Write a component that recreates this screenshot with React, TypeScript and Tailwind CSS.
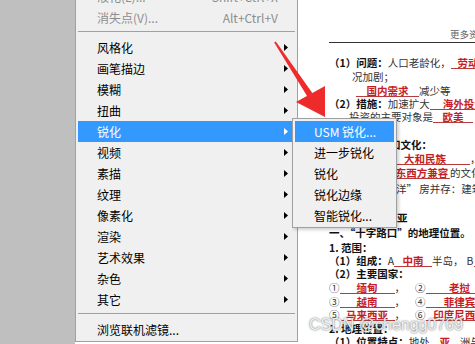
import React from 'react';

type Item =
  | { kind: 'sep' }
  | { kind: 'item'; label: string; shortcut?: string; disabled?: boolean; sub?: boolean; active?: boolean };

const MENU: Item[] = [
  { kind: 'item', label: '液化(L)...', shortcut: 'Shift+Ctrl+X', disabled: true },
  { kind: 'item', label: '消失点(V)...', shortcut: 'Alt+Ctrl+V', disabled: true },
  { kind: 'sep' },
  { kind: 'item', label: '风格化', sub: true },
  { kind: 'item', label: '画笔描边', sub: true },
  { kind: 'item', label: '模糊', sub: true },
  { kind: 'item', label: '扭曲', sub: true },
  { kind: 'item', label: '锐化', sub: true, active: true },
  { kind: 'item', label: '视频', sub: true },
  { kind: 'item', label: '素描', sub: true },
  { kind: 'item', label: '纹理', sub: true },
  { kind: 'item', label: '像素化', sub: true },
  { kind: 'item', label: '渲染', sub: true },
  { kind: 'item', label: '艺术效果', sub: true },
  { kind: 'item', label: '杂色', sub: true },
  { kind: 'item', label: '其它', sub: true },
  { kind: 'sep' },
  { kind: 'item', label: '浏览联机滤镜...' },
];

const SUBMENU = ['USM 锐化...', '进一步锐化', '锐化', '锐化边缘', '智能锐化...'];

const Caret = ({ white }: { white?: boolean }) => (
  <svg width="4" height="7" viewBox="0 0 4 7" className="shrink-0">
    <path d="M0 0L4 3.5L0 7Z" fill={white ? '#ffffff' : '#000000'} />
  </svg>
);

const Blank = ({ w, children }: { w: string; children?: React.ReactNode }) => (
  <span className={`inline-block ${w} border-b border-[#b83a3a] text-center font-bold text-[#c41e24] leading-[11px]`}>
    {children}
  </span>
);

const Line = ({ cls, children }: { cls: string; children?: React.ReactNode }) => (
  <div className={`${cls} whitespace-nowrap text-[#333]`}>{children}</div>
);

export default function App() {
  return (
    <div className="relative flex h-[344px] w-[475px] overflow-hidden bg-white font-['Noto_Sans_CJK_SC',sans-serif]">
      {/* workspace strip */}
      <div className="w-[75px] shrink-0 bg-[#bfbfbf]" />

      {/* filter menu */}
      <div className="w-[223px] shrink-0">
        <div className="-mt-[14px] border-x border-b border-[#a0a0a0] bg-[#f0f0f0] px-[2px] pb-[1px] text-[12px]">
          {MENU.map((it, i) =>
            it.kind === 'sep' ? (
              <div key={i} className="h-[9px] pt-[3px]">
                <div className="h-px bg-[#a0a0a0]" />
              </div>
            ) : (
              <div
                key={i}
                className={`flex h-[21px] items-center pl-[19px] pr-[7px] ${
                  it.active ? 'bg-[#3399ff] text-white' : it.disabled ? 'text-[#8d8d8d]' : 'text-black'
                }`}
              >
                <span className="flex-1">{it.label}</span>
                {it.shortcut && <span className="mr-[10px]">{it.shortcut}</span>}
                {it.sub && <Caret white={it.active} />}
              </div>
            )
          )}
        </div>
      </div>

      {/* document */}
      <div className="flex-1 overflow-hidden bg-white text-[10.5px]">
        <div className="flex h-[42px] items-end pb-[2px] pl-[152px] text-[9.5px] leading-[12px] whitespace-nowrap text-[#666]">
          更多资料下载
        </div>
        <div className="ml-[31px] h-px bg-[#333]" />
        <div className="mt-[12px]">
          <Line cls="h-[15px] leading-[15px] pl-[31px]">
            <b className="text-[#111]">（1）问题：</b>人口老龄化，<Blank w="w-[45px]">劳动力</Blank>短缺
          </Line>
          <Line cls="h-[14px] leading-[14px] pl-[54px]">况加剧；</Line>
          <Line cls="h-[13px] leading-[13px] pl-[58px]">
            <Blank w="w-[63px]">国内需求</Blank>减少等
          </Line>
          <Line cls="h-[13px] leading-[13px] pl-[31px]">
            <b className="text-[#111]">（2）措施：</b>加速扩大<Blank w="w-[68px]">海外投资</Blank>
          </Line>
          <Line cls="h-[14px] leading-[14px] pl-[51px]">
            投资的主要对象是<Blank w="w-[40px]">欧美</Blank>
          </Line>
          <Line cls="h-[14px] leading-[14px]" />
          <Line cls="h-[14px] leading-[14px] pl-[92px]">
            <b className="text-[#111]">和文化：</b>
          </Line>
          <Line cls="h-[13px] leading-[13px] pl-[82px]">
            <Blank w="w-[90px]">大和民族</Blank>，
          </Line>
          <Line cls="h-[16px] leading-[16px] pl-[96px]">
            <Blank w="w-[56px]">东西方兼容</Blank>的文化
          </Line>
          <Line cls="h-[16px] leading-[16px] pl-[98px]">洋” 房并存：建筑、服饰</Line>
          <Line cls="h-[14px] leading-[14px]" />
          <Line cls="h-[14px] leading-[14px] pl-[99px]">
            <b className="text-[#111]">亚</b>
          </Line>
          <Line cls="h-[16px] leading-[16px] pl-[31px]">
            <b className="text-[#111]">一、“十字路口”的地理位置。</b>
          </Line>
          <Line cls="h-[13px] leading-[13px] pl-[31px]">
            <b className="text-[#111]">1. 范围：</b>
          </Line>
          <Line cls="h-[13px] leading-[13px] pl-[31px]">
            <b className="text-[#111]">（1）组成：</b>A<Blank w="w-[38px]">中南</Blank>半岛，
            <span className="ml-[3px]">B</span>
            <Blank w="w-[50px]">马来</Blank>
          </Line>
          <Line cls="h-[14px] leading-[14px] pl-[31px]">
            <b className="text-[#111]">（2）主要国家：</b>
          </Line>
          <Line cls="h-[14px] leading-[14px] pl-[31px]">
            ①<Blank w="w-[55px]">缅甸</Blank>，<span className="ml-[10px]">②</span>
            <Blank w="w-[68px]">老挝</Blank>
          </Line>
          <Line cls="h-[13px] leading-[13px] pl-[31px]">
            ③<Blank w="w-[55px]">越南</Blank>，<span className="ml-[10px]">④</span>
            <Blank w="w-[68px]">菲律宾</Blank>
          </Line>
          <Line cls="h-[14px] leading-[14px] pl-[31px]">
            ⑤<Blank w="w-[55px]">马来西亚</Blank>，<span className="ml-[10px]">⑥</span>
            <Blank w="w-[68px]">印度尼西亚</Blank>
          </Line>
          <Line cls="h-[13px] leading-[13px] pl-[31px]">
            <b className="text-[#111]">2. 地理位置：</b>
          </Line>
          <Line cls="h-[14px] leading-[14px] pl-[31px]">
            <b className="text-[#111]">（1）位置特点：</b>地处<Blank w="w-[30px]">亚</Blank>洲与
          </Line>
        </div>
      </div>

      {/* sharpen submenu */}
      <div className="absolute left-[292px] top-[118px] w-[105px] border border-[#a0a0a0] bg-[#f0f0f0] px-[2px] pt-[2px] pb-[1px] text-[12px] shadow-[2px_2px_3px_rgba(0,0,0,0.18)]">
        {SUBMENU.map((s, i) => (
          <div
            key={s}
            className={`flex h-[21px] items-center whitespace-nowrap pl-[19px] ${
              i === 0 ? 'bg-[#3399ff] text-white' : 'text-black'
            }`}
          >
            {s}
          </div>
        ))}
      </div>

      {/* red pointer arrow */}
      <svg className="pointer-events-none absolute left-0 top-0" width="475" height="344" viewBox="0 0 475 344">
        <polygon points="275.8,41.4 312.5,93.3 307.5,96.7 274.2,42.6" fill="#ee2b2b" />
        <polygon points="296,102 325,86 325,117" fill="#ee2b2b" />
      </svg>

      {/* watermark */}
      <div className="pointer-events-none absolute left-[309px] top-[315px] font-['Liberation_Sans',sans-serif] text-[16px] leading-[20px] text-[#efefef] [text-shadow:0_0_2px_#555]">
        CSDN @chengg0769
      </div>
    </div>
  );
}
